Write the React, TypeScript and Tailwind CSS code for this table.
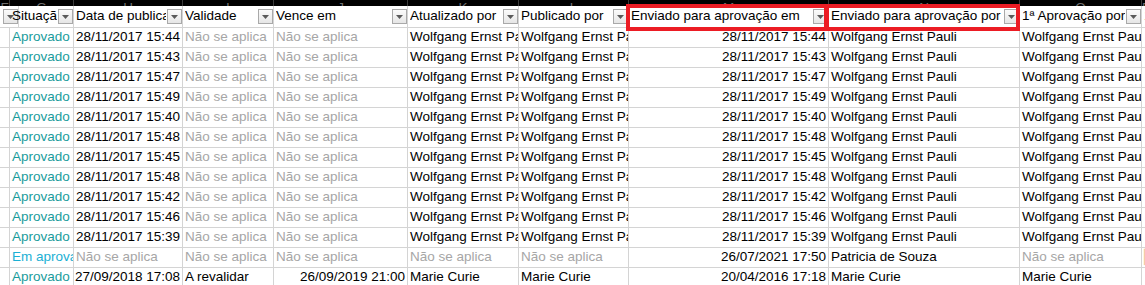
import React from 'react';

type Cell = { t: string; c?: string; r?: boolean };

const GRID = 'grid grid-cols-[10px_64px_109px_91px_134px_111px_110px_200px_191px_122px_1fr]';

const LETTERS = ['F', 'G', 'H', 'I', 'J', 'K', 'L', 'M', 'N', 'O', 'P'];

const HEADERS = [
    '',
    'Situação',
    'Data de publicação',
    'Validade',
    'Vence em',
    'Atualizado por',
    'Publicado por',
    'Enviado para aprovação em',
    'Enviado para aprovação por',
    '1ª Aprovação por',
    '',
];

const OK = 'text-[#1a9c9c]';
const WAIT = 'text-[#1bb0d4]';
const NA = 'text-[#a6a6a6]';

const wolfgang = (time: string): Cell[] => [
    { t: '' },
    { t: 'Aprovado', c: OK },
    { t: `28/11/2017 ${time}`, r: true },
    { t: 'Não se aplica', c: NA },
    { t: 'Não se aplica', c: NA },
    { t: 'Wolfgang Ernst Pauli' },
    { t: 'Wolfgang Ernst Pauli' },
    { t: `28/11/2017 ${time}`, r: true },
    { t: 'Wolfgang Ernst Pauli' },
    { t: 'Wolfgang Ernst Pauli' },
    { t: '' },
];

const ROWS: Cell[][] = [
    ...['15:44', '15:43', '15:47', '15:49', '15:40', '15:48', '15:45', '15:48', '15:42', '15:46', '15:39'].map(wolfgang),
    [
        { t: '' },
        { t: 'Em aprovação', c: WAIT },
        { t: 'Não se aplica', c: NA },
        { t: 'Não se aplica', c: NA },
        { t: 'Não se aplica', c: NA },
        { t: 'Não se aplica', c: NA },
        { t: 'Não se aplica', c: NA },
        { t: '26/07/2021 17:50', r: true },
        { t: 'Patricia de Souza' },
        { t: 'Não se aplica', c: NA },
        { t: '▌', c: 'text-[#f4c9a8]' },
    ],
    [
        { t: '' },
        { t: 'Aprovado', c: OK },
        { t: '27/09/2018 17:08', r: true },
        { t: 'A revalidar' },
        { t: '26/09/2019 21:00', r: true },
        { t: 'Marie Curie' },
        { t: 'Marie Curie' },
        { t: '20/04/2016 17:18', r: true },
        { t: 'Marie Curie' },
        { t: 'Marie Curie' },
        { t: '' },
    ],
];

function FilterButton() {
    return (
        <div className="absolute right-0 top-[3px] w-[15px] h-[15px] border border-[#a9a9a9] bg-gradient-to-b from-[#fbfbfb] to-[#e6e6e6] flex items-center justify-center">
            <svg width="7" height="4" viewBox="0 0 7 4">
                <path d="M0 0h7L3.5 4z" fill="#5a5a5a" />
            </svg>
        </div>
    );
}

export default function App() {
    return (
        <div className="relative w-[1145px] h-[285px] overflow-hidden bg-white text-[13.5px] text-black font-['Liberation_Sans',Arial,sans-serif]">
            {/* column letters, cut off at the top */}
            <div className={`${GRID} h-[6px] bg-black overflow-hidden`}>
                {LETTERS.map((l) => (
                    <div key={l} className="border-r border-[#3a3a3a] flex justify-center items-end text-[#6f6f6f] leading-[15px]">
                        <span className="mb-[-1px]">{l}</span>
                    </div>
                ))}
            </div>

            {/* header row with filters */}
            <div className={`${GRID} h-[22px] border-b border-[#d4d4d4]`}>
                {HEADERS.map((h, i) => (
                    <div key={i} className="relative border-r border-[#d4d4d4] pl-[2px] pr-[16px] flex items-center whitespace-nowrap overflow-hidden">
                        <span className="flex-1 min-w-0 overflow-hidden">{h}</span>
                        {i < 10 && <FilterButton />}
                        {i === 10 && <span className="text-[#e8141e]">1</span>}
                    </div>
                ))}
            </div>

            {/* data rows */}
            {ROWS.map((row, ri) => (
                <div key={ri} className={`${GRID} h-[20px] border-b border-[#d4d4d4]`}>
                    {row.map((cell, ci) => (
                        <div
                            key={ci}
                            className={`border-r border-[#d4d4d4] px-[2px] flex items-center whitespace-nowrap overflow-hidden ${cell.r ? 'justify-end' : ''} ${cell.c ?? ''}`}
                        >
                            {cell.t}
                        </div>
                    ))}
                </div>
            ))}

            {/* red highlight boxes around the two "Enviado" headers */}
            <div className="absolute left-[626px] top-[4px] w-[203px] h-[27px] border-4 border-[#ec1c24]" />
            <div className="absolute left-[824px] top-[4px] w-[196px] h-[27px] border-4 border-[#ec1c24]" />
        </div>
    );
}
